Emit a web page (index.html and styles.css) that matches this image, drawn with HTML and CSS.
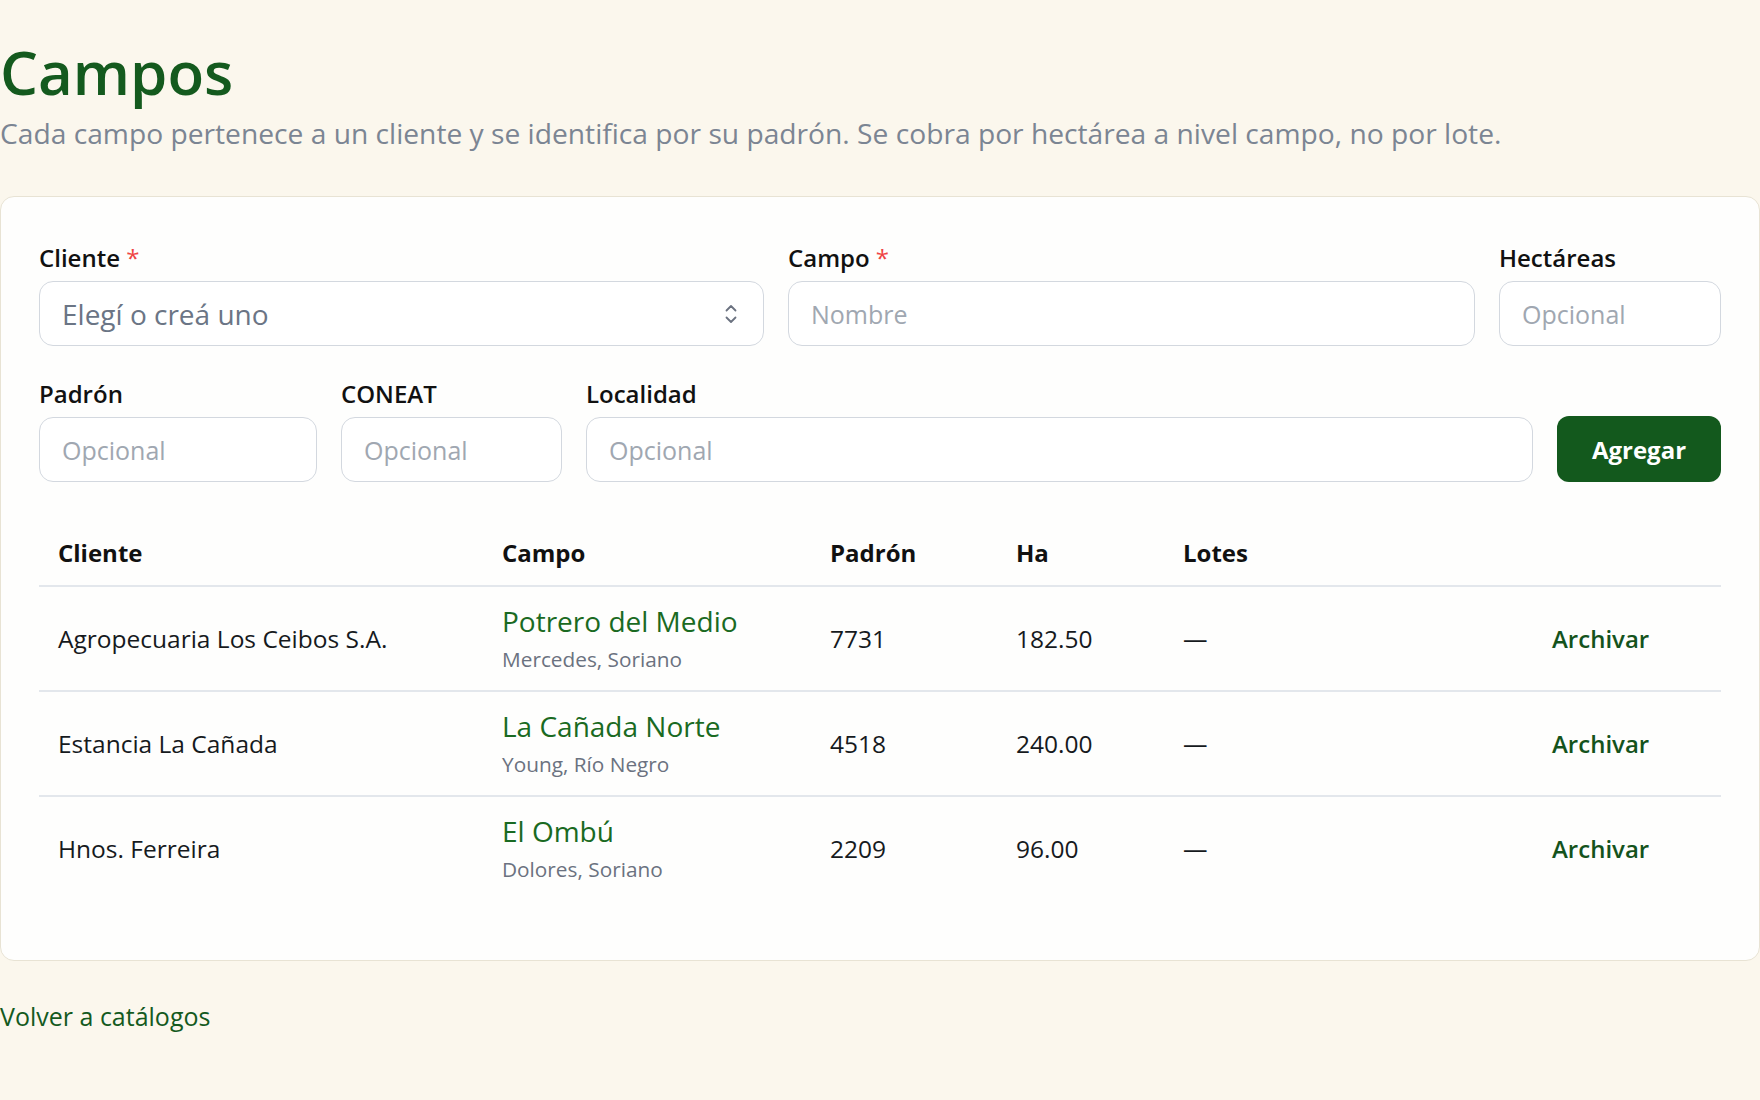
FILE: index.html
```html
<!DOCTYPE html>
<html lang="es">
<head>
    <meta charset="UTF-8">
    <title>Campos</title>
    <link rel="stylesheet" href="styles.css">
</head>
<body>
    <main class="page">
        <h1 class="title">Campos</h1>
        <p class="subtitle">Cada campo pertenece a un cliente y se identifica por su padrón. Se cobra por hectárea a nivel campo, no por lote.</p>

        <section class="card">
            <form class="form" onsubmit="return false">
                <div class="row row-1">
                    <div class="field">
                        <label for="cliente">Cliente <span class="req">*</span></label>
                        <div class="select-wrap">
                            <select id="cliente" class="control select">
                                <option>Elegí o creá uno</option>
                            </select>
                            <svg class="chevrons" width="14" height="22" viewBox="0 0 14 22" fill="none" stroke="#6b7280" stroke-width="1.8" stroke-linecap="round" stroke-linejoin="round">
                                <path d="M2.5 7.5 7 3l4.5 4.5"/>
                                <path d="M2.5 14.5 7 19l4.5-4.5"/>
                            </svg>
                        </div>
                    </div>
                    <div class="field">
                        <label for="campo">Campo <span class="req">*</span></label>
                        <input id="campo" class="control" type="text" placeholder="Nombre">
                    </div>
                    <div class="field">
                        <label for="hectareas">Hectáreas</label>
                        <input id="hectareas" class="control" type="text" placeholder="Opcional">
                    </div>
                </div>

                <div class="row row-2">
                    <div class="field">
                        <label for="padron">Padrón</label>
                        <input id="padron" class="control" type="text" placeholder="Opcional">
                    </div>
                    <div class="field">
                        <label for="coneat">CONEAT</label>
                        <input id="coneat" class="control" type="text" placeholder="Opcional">
                    </div>
                    <div class="field">
                        <label for="localidad">Localidad</label>
                        <input id="localidad" class="control" type="text" placeholder="Opcional">
                    </div>
                    <button class="btn-primary" type="submit">Agregar</button>
                </div>
            </form>

            <table class="list">
                <thead>
                    <tr>
                        <th class="col-cliente">Cliente</th>
                        <th class="col-campo">Campo</th>
                        <th class="col-padron">Padrón</th>
                        <th class="col-ha">Ha</th>
                        <th class="col-lotes">Lotes</th>
                        <th class="col-acciones"></th>
                    </tr>
                </thead>
                <tbody>
                    <tr>
                        <td>Agropecuaria Los Ceibos S.A.</td>
                        <td>
                            <a class="campo-name" href="#">Potrero del Medio</a>
                            <div class="campo-loc">Mercedes, Soriano</div>
                        </td>
                        <td>7731</td>
                        <td>182.50</td>
                        <td>—</td>
                        <td><button class="btn-link" type="button">Archivar</button></td>
                    </tr>
                    <tr>
                        <td>Estancia La Cañada</td>
                        <td>
                            <a class="campo-name" href="#">La Cañada Norte</a>
                            <div class="campo-loc">Young, Río Negro</div>
                        </td>
                        <td>4518</td>
                        <td>240.00</td>
                        <td>—</td>
                        <td><button class="btn-link" type="button">Archivar</button></td>
                    </tr>
                    <tr>
                        <td>Hnos. Ferreira</td>
                        <td>
                            <a class="campo-name" href="#">El Ombú</a>
                            <div class="campo-loc">Dolores, Soriano</div>
                        </td>
                        <td>2209</td>
                        <td>96.00</td>
                        <td>—</td>
                        <td><button class="btn-link" type="button">Archivar</button></td>
                    </tr>
                </tbody>
            </table>
        </section>

        <a class="back" href="#">Volver a catálogos</a>
    </main>
</body>
</html>
```

FILE: styles.css
```css
body {
    margin: 0;
    background: #fbf7ed;
    color: #161a1d;
    font-family: "Open Sans", "Noto Sans", sans-serif;
}
.page {
    padding: 42px 0 60px;
}
.title {
    margin: 0;
    font-size: 60px;
    line-height: 60px;
    font-weight: 600;
    color: #145a1e;
}
.subtitle {
    margin: 13px 0 45px;
    font-size: 28.2px;
    line-height: 36px;
    color: #7b8593;
}
.card {
    background: #fefefd;
    border: 1px solid #e8e3d4;
    border-radius: 14px;
    padding: 46px 38px 60px;
}
.row {
    display: grid;
    gap: 24px;
    align-items: end;
}
.row-1 {
    grid-template-columns: 725fr 687fr 222fr;
}
.row-2 {
    margin-top: 33px;
    grid-template-columns: 278fr 221fr 947fr 164px;
}
.field label {
    display: block;
    margin-bottom: 8px;
    font-size: 24px;
    line-height: 30px;
    font-weight: 600;
    color: #111;
}
.req {
    color: #ef4444;
    font-weight: 400;
}
.control {
    display: block;
    width: 100%;
    height: 65px;
    box-sizing: border-box;
    padding: 0 22px;
    border: 1.5px solid #d3d8df;
    border-radius: 14px;
    background: #fff;
    font-family: inherit;
    font-size: 25px;
    color: #161a1d;
    outline: none;
}
.control::placeholder {
    color: #a0a7b1;
}
.select-wrap {
    position: relative;
}
.select {
    appearance: none;
    -webkit-appearance: none;
    font-size: 28px;
    color: #6b7585;
}
.chevrons {
    position: absolute;
    right: 26px;
    top: 22px;
    pointer-events: none;
}
.btn-primary {
    height: 66px;
    border: none;
    border-radius: 12px;
    background: #13591d;
    color: #fff;
    font-family: inherit;
    font-size: 24px;
    font-weight: 700;
    cursor: pointer;
}
.list {
    width: 100%;
    margin-top: 39px;
    border-collapse: collapse;
    font-size: 24.5px;
    line-height: 30px;
}
.list th {
    text-align: left;
    padding: 17px 19px;
    font-size: 24px;
    font-weight: 700;
    color: #111;
    border-bottom: 2px solid #e3e7ec;
}
.list td {
    padding: 16px 19px;
    vertical-align: middle;
    border-bottom: 2px solid #e3e7ec;
}
.list tbody tr:last-child td {
    border-bottom: none;
}
.col-cliente { width: 406px; }
.col-campo { width: 290px; }
.col-padron { width: 148px; }
.col-ha { width: 129px; }
.col-lotes { width: 331px; }
.campo-name {
    display: block;
    font-size: 28px;
    line-height: 36px;
    color: #1a6a22;
    text-decoration: none;
}
.campo-loc {
    margin-top: 5px;
    font-size: 20.8px;
    line-height: 30px;
    color: #6b7280;
}
.btn-link {
    padding: 0;
    border: none;
    background: none;
    font-family: inherit;
    font-size: 24px;
    font-weight: 600;
    color: #14531c;
    cursor: pointer;
}
.back {
    display: inline-block;
    margin-top: 39px;
    font-size: 25px;
    line-height: 32px;
    color: #145a1e;
    text-decoration: none;
}
```
